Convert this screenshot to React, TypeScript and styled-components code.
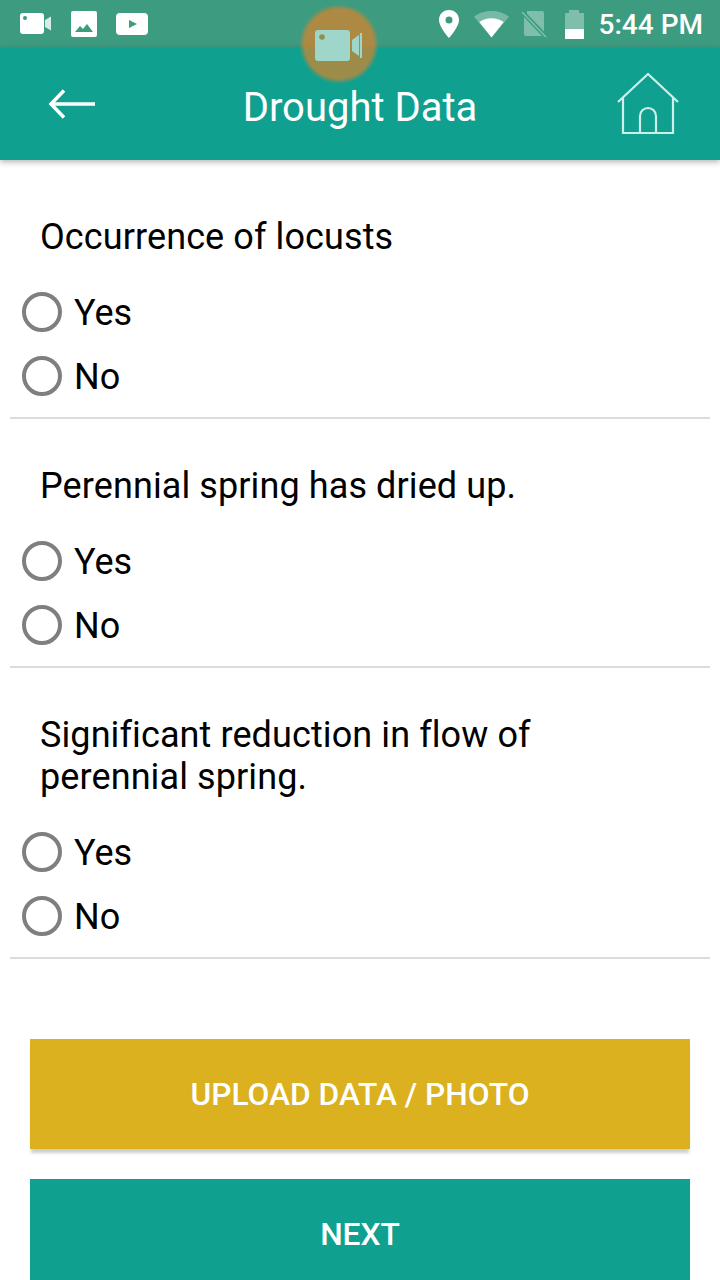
import React from 'react';
import styled, { createGlobalStyle } from 'styled-components';

const questions = [
  'Occurrence of locusts',
  'Perennial spring has dried up.',
  'Significant reduction in flow of perennial spring.',
];

const VideoIcon = () => (
  <svg width="32" height="22" viewBox="0 0 32 22">
    <rect x="0" y="0" width="24" height="21" rx="3" fill="#fff" />
    <circle cx="5" cy="5" r="2" fill="#3d9b80" />
    <path d="M25 7l6-3.500v14L25 14z" fill="#fff" fillOpacity="0.8" />
  </svg>
);

const PictureIcon = () => (
  <svg width="26" height="26" viewBox="0 0 26 26">
    <rect x="0" y="0" width="26" height="26" rx="2" fill="#fff" />
    <path d="M4 21l5-6 3 3 4-5 6 8z" fill="#3d9b80" />
  </svg>
);

const PlayIcon = () => (
  <svg width="32" height="22" viewBox="0 0 32 22">
    <rect x="0" y="0" width="32" height="22" rx="4" fill="#fff" />
    <path d="M13 7l8 4-8 4z" fill="#3d9b80" />
  </svg>
);

const PinIcon = () => (
  <svg width="20" height="28" viewBox="1 0 20 28">
    <path
      fillRule="evenodd"
      d="M11 0C5 0 1 4.400 1 10c0 7 10 18 10 18s10-11 10-18C21 4.400 17 0 11 0zm0 6.500a3.500 3.500 0 1 1 0 7 3.500 3.500 0 0 1 0-7z"
      fill="#fff"
    />
  </svg>
);

const WifiIcon = () => (
  <svg width="35" height="28" viewBox="0 0 36 28">
    <path d="M0 6.500C5 2.500 11 0.500 18 0.500s13 2 18 6L18 28z" fill="#fff" fillOpacity="0.3" />
    <path d="M5.500 12C9 9.300 13.300 8 18 8s9 1.300 12.500 4L18 28z" fill="#fff" />
  </svg>
);

const SimIcon = () => (
  <SimSlot>
    <svg width="26" height="28" viewBox="0 0 26 28">
      <path d="M6 3.700V1h15a2 2 0 0 1 2 2v18.400z" fill="#fff" fillOpacity="0.35" />
      <path d="M3 7v17a2 2 0 0 0 2 2h16z" fill="#fff" fillOpacity="0.35" />
      <path d="M1 2l24 25" stroke="#fff" strokeOpacity="0.35" strokeWidth="1.500" />
    </svg>
  </SimSlot>
);

const BatteryIcon = () => (
  <svg width="19" height="29" viewBox="0 0 19 29">
    <path d="M4 0h10v3h4a1 1 0 0 1 1 1v15H0V4a1 1 0 0 1 1-1h3z" fill="#fff" fillOpacity="0.35" />
    <path d="M0 19h19v10H0z" fill="#fff" />
  </svg>
);

const BackIcon = () => (
  <svg width="48" height="32" viewBox="0 0 48 32">
    <path d="M47 16H3M16 2.500L3 16l13 13.500" fill="none" stroke="#fff" strokeWidth="3.500" />
  </svg>
);

const HomeIcon = () => (
  <svg width="62" height="62" viewBox="0 0 62 62">
    <path
      d="M1 29L31 1l30 28M6 25v35h50V25M23 60V43a8 8 0 0 1 16 0v17"
      fill="none"
      stroke="#cdeee9"
      strokeWidth="2.200"
    />
  </svg>
);

const RecordIcon = () => (
  <svg width="48" height="32" viewBox="0 0 48 32">
    <rect x="0" y="0" width="35" height="31" rx="3" fill="#9fd6ca" />
    <circle cx="7" cy="7" r="2.800" fill="#8f8f50" />
    <path d="M37 10l7-5v21l-7-5z" fill="#9fd6ca" />
    <rect x="45" y="3" width="2" height="25" fill="#9fd6ca" />
  </svg>
);

export default function App() {
  return (
    <Screen>
      <GlobalStyle />
      <StatusBar>
        <StatusGroup>
          <VideoIcon />
          <PictureIcon />
          <PlayIcon />
        </StatusGroup>
        <StatusGroup $gap={15}>
          <PinIcon />
          <WifiIcon />
          <SimIcon />
          <BatteryIcon />
          <Clock>5:44 PM</Clock>
        </StatusGroup>
      </StatusBar>
      <RecordBubble>
        <RecordIcon />
      </RecordBubble>
      <Header>
        <HeaderSide>
          <BackIcon />
        </HeaderSide>
        <Title>Drought Data</Title>
        <HeaderSide $right>
          <HomeIcon />
        </HeaderSide>
      </Header>
      <Form>
        {questions.map((q) => (
          <Question key={q}>
            <Label>{q}</Label>
            <Options>
              <Option>
                <Radio />
                <OptionText>Yes</OptionText>
              </Option>
              <Option>
                <Radio />
                <OptionText>No</OptionText>
              </Option>
            </Options>
          </Question>
        ))}
      </Form>
      <Buttons>
        <ActionButton $color="#dbb11f" $raised>
          UPLOAD DATA / PHOTO
        </ActionButton>
        <ActionButton $color="#0fa08f">NEXT</ActionButton>
      </Buttons>
    </Screen>
  );
}

const GlobalStyle = createGlobalStyle`
  html, body {
    margin: 0;
    padding: 0;
    background: #fff;
  }
`;

const Screen = styled.div`
  position: relative;
  width: 720px;
  height: 1280px;
  overflow: hidden;
  background: #fff;
  font-family: Roboto, 'Liberation Sans', sans-serif;
  color: #000;
`;

const StatusBar = styled.div`
  height: 48px;
  box-sizing: border-box;
  padding: 0 17px 0 20px;
  display: flex;
  align-items: center;
  justify-content: space-between;
  background: #3d9b80;
`;

const StatusGroup = styled.div<{ $gap?: number }>`
  display: flex;
  align-items: center;
  gap: ${(p) => p.$gap ?? 19}px;
`;

const SimSlot = styled.span`
  display: flex;
  margin: 0 3px 0 -3px;
`;

const Clock = styled.span`
  font-size: 28px;
  font-weight: 500;
  color: #fff;
`;

const RecordBubble = styled.div`
  position: absolute;
  left: 299px;
  top: 4px;
  width: 80px;
  height: 80px;
  border-radius: 50%;
  display: flex;
  align-items: center;
  justify-content: center;
  padding-top: 3px;
  box-sizing: border-box;
  background: radial-gradient(
    circle closest-side,
    rgba(225, 130, 40, 0.68) 0%,
    rgba(225, 130, 40, 0.68) 86%,
    rgba(225, 130, 40, 0) 100%
  );
  z-index: 2;
`;

const Header = styled.header`
  height: 112px;
  display: flex;
  align-items: center;
  justify-content: space-between;
  background: #0fa08f;
  box-shadow: 0 2px 6px rgba(0, 0, 0, 0.3);
  padding: 0 41px 0 48px;
  position: relative;
  z-index: 1;
`;

const HeaderSide = styled.div<{ $right?: boolean }>`
  width: 62px;
  display: flex;
  justify-content: ${(p) => (p.$right ? 'flex-end' : 'flex-start')};
`;

const Title = styled.h1`
  margin: 6px 0 0 -7px;
  font-size: 40px;
  font-weight: 400;
  color: #fff;
`;

const Form = styled.main`
  padding-top: 56px;
`;

const Question = styled.section`
  margin: 0 10px;
  padding-bottom: 9px;
  border-bottom: 2px solid #dcdcdc;
  & + & {
    padding-top: 46px;
  }
`;

const Label = styled.p`
  margin: 0 0 22px;
  padding: 0 30px;
  font-size: 36px;
  letter-spacing: 0.1px;
  line-height: 42px;
`;

const Options = styled.div`
  display: flex;
  flex-direction: column;
`;

const Option = styled.label`
  height: 64px;
  display: flex;
  align-items: center;
  gap: 12px;
  padding-left: 12px;
  font-size: 36px;
`;

const OptionText = styled.span`
  padding-top: 2px;
`;

const Radio = styled.span`
  width: 40px;
  height: 40px;
  margin-top: -1px;
  box-sizing: border-box;
  border: 4px solid #7f7f7f;
  border-radius: 50%;
`;

const Buttons = styled.div`
  display: flex;
  flex-direction: column;
  gap: 30px;
  margin-top: 80px;
  padding: 0 30px;
`;

const ActionButton = styled.button<{ $color: string; $raised?: boolean }>`
  flex: none;
  height: 110px;
  border: 0;
  padding: 0;
  background: ${(p) => p.$color};
  box-shadow: ${(p) => (p.$raised ? '0 5px 3px -1px rgba(0, 0, 0, 0.2)' : 'none')};
  color: #fff;
  font-family: Roboto, 'Liberation Sans', sans-serif;
  font-size: 31.7px;
  font-weight: 500;
`;
